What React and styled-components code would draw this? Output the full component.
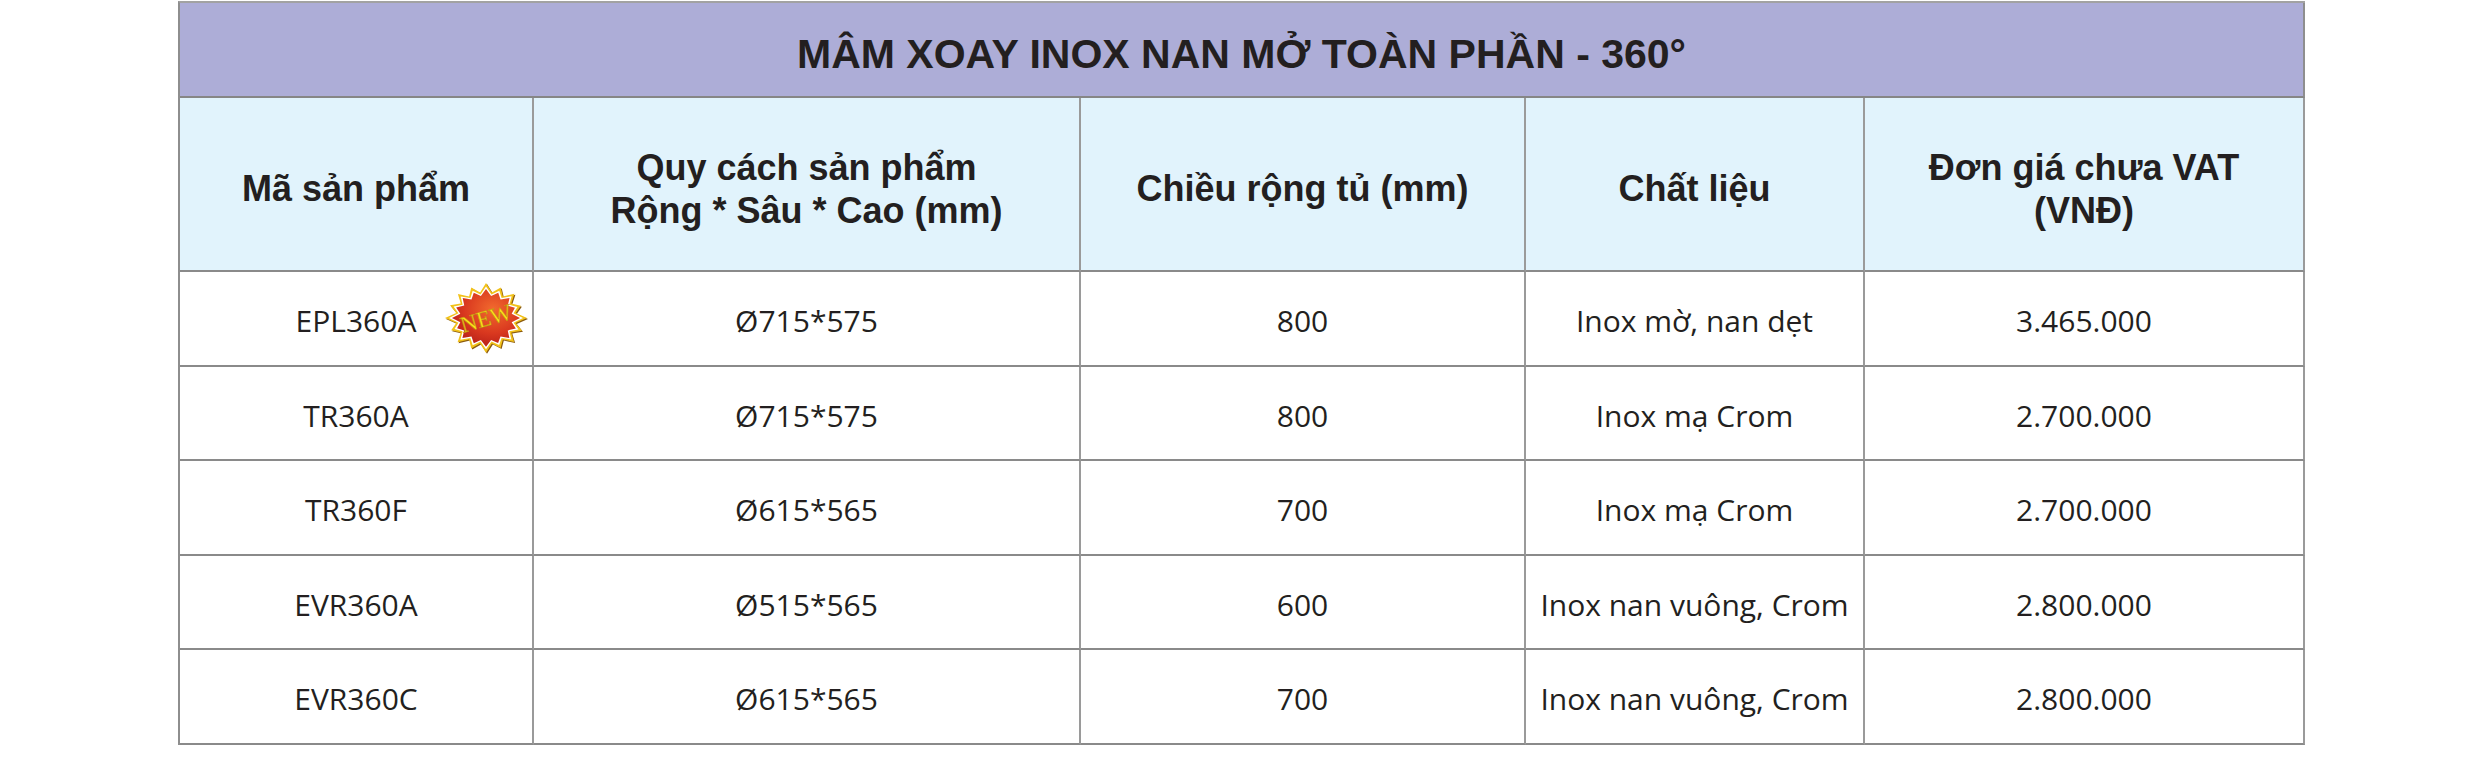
import React from 'react';
import styled, { createGlobalStyle } from 'styled-components';

const rows = [
  { code: 'EPL360A', size: 'Ø715*575', width: '800', material: 'Inox mờ, nan dẹt', price: '3.465.000', isNew: true },
  { code: 'TR360A', size: 'Ø715*575', width: '800', material: 'Inox mạ Crom', price: '2.700.000' },
  { code: 'TR360F', size: 'Ø615*565', width: '700', material: 'Inox mạ Crom', price: '2.700.000' },
  { code: 'EVR360A', size: 'Ø515*565', width: '600', material: 'Inox nan vuông, Crom', price: '2.800.000' },
  { code: 'EVR360C', size: 'Ø615*565', width: '700', material: 'Inox nan vuông, Crom', price: '2.800.000' },
];

// spikes of the "new" sticker, slightly uneven like the clip-art
function starPoints(cx, cy, rx, ry, inner, count, jitter) {
  const pts = [];
  for (let i = 0; i < count * 2; i++) {
    const a = (Math.PI * i) / count - Math.PI / 2;
    const outer = i % 2 === 0;
    const k = outer ? 1 - (jitter[(i / 2) % jitter.length] || 0) : inner;
    pts.push(`${(cx + Math.cos(a) * rx * k).toFixed(2)},${(cy + Math.sin(a) * ry * k).toFixed(2)}`);
  }
  return pts.join(' ');
}

const jit = [0, 0.06, 0.02, 0.08, 0, 0.05, 0.03, 0.07, 0.01, 0.06, 0.02, 0.08, 0, 0.05, 0.03, 0.06];

function NewSticker() {
  return (
    <svg width="84" height="72" viewBox="0 0 84 72">
      <defs>
        <radialGradient id="newRed" cx="60%" cy="35%" r="70%">
          <stop offset="0%" stopColor="#f26a2e" />
          <stop offset="60%" stopColor="#d9381f" />
          <stop offset="100%" stopColor="#b41e18" />
        </radialGradient>
      </defs>
      <polygon points={starPoints(43, 37, 41, 35, 0.74, 16, jit)} fill="#8a5a10" />
      <polygon points={starPoints(42, 36, 41, 35, 0.74, 16, jit)} fill="#f2c21a" />
      <polygon points={starPoints(42, 36, 37, 31.5, 0.76, 16, jit)} fill="#ffffff" />
      <polygon points={starPoints(42, 36, 34, 29, 0.77, 16, jit)} fill="url(#newRed)" />
      <text
        x="42"
        y="44"
        textAnchor="middle"
        fontFamily="'Liberation Serif', serif"
        fontSize="23"
        fill="#ffe11a"
        stroke="#b88a10"
        strokeWidth="0.5"
        transform="rotate(-16 42 36)"
      >
        NEW
      </text>
    </svg>
  );
}

function App() {
  return (
    <>
      <GlobalStyle />
      <Page>
        <Table>
          <TitleCell>MÂM XOAY INOX NAN MỞ TOÀN PHẦN - 360°</TitleCell>

          <HeadCell>Mã sản phẩm</HeadCell>
          <HeadCell>
            Quy cách sản phẩm
            <br />
            Rộng * Sâu * Cao (mm)
          </HeadCell>
          <HeadCell>Chiều rộng tủ (mm)</HeadCell>
          <HeadCell>Chất liệu</HeadCell>
          <HeadCell>
            Đơn giá chưa VAT
            <br />
            (VNĐ)
          </HeadCell>

          {rows.map((r) => (
            <React.Fragment key={r.code}>
              <Cell>
                {r.code}
                {r.isNew && (
                  <Badge>
                    <NewSticker />
                  </Badge>
                )}
              </Cell>
              <Cell>{r.size}</Cell>
              <Cell>{r.width}</Cell>
              <Cell>{r.material}</Cell>
              <Cell>{r.price}</Cell>
            </React.Fragment>
          ))}
        </Table>
      </Page>
    </>
  );
}

export default App;

const GlobalStyle = createGlobalStyle`
  * {
    box-sizing: border-box;
  }

  body {
    margin: 0;
    background: #ffffff;
    font-family: 'Liberation Sans', Arial, sans-serif;
  }
`;

const Page = styled.div`
  width: 2480px;
  height: 759px;
  padding: 1px 0 0 178px;
  background: #ffffff;
`;

const Table = styled.div`
  display: grid;
  grid-template-columns: 354px 547px 445px 339px 440px;
  grid-template-rows: 95px 174px repeat(5, 94.5px);
  width: 2127px;
  border-top: 2px solid #a2a2a2;
  border-left: 2px solid #8e8e8e;
  color: #231f20;
`;

const TitleCell = styled.div`
  grid-column: 1 / -1;
  display: flex;
  align-items: center;
  justify-content: center;
  padding-top: 9px;
  background: #adadd7;
  border-right: 2px solid #8e8e8e;
  border-bottom: 2px solid #868686;
  font-family: 'Liberation Sans', Arial, sans-serif;
  font-size: 41px;
  font-weight: 700;
`;

const HeadCell = styled.div`
  display: flex;
  align-items: center;
  justify-content: center;
  padding-top: 9px;
  background: #e1f3fc;
  border-right: 2px solid #9a9a9a;
  border-bottom: 2px solid #8a8a8a;
  text-align: center;
  font-family: 'Liberation Sans', Arial, sans-serif;
  font-size: 36px;
  font-weight: 700;
  line-height: 43px;
`;

const Cell = styled.div`
  position: relative;
  display: flex;
  align-items: center;
  justify-content: center;
  padding-top: 5px;
  background: #ffffff;
  border-right: 2px solid #9a9a9a;
  border-bottom: 2px solid #8a8a8a;
  font-family: 'Open Sans', 'Noto Sans', sans-serif;
  font-size: 30px;
  font-weight: 400;
  white-space: nowrap;
`;

const Badge = styled.div`
  position: absolute;
  top: 10px;
  right: 4px;
  width: 84px;
  height: 72px;
  line-height: 0;
`;
